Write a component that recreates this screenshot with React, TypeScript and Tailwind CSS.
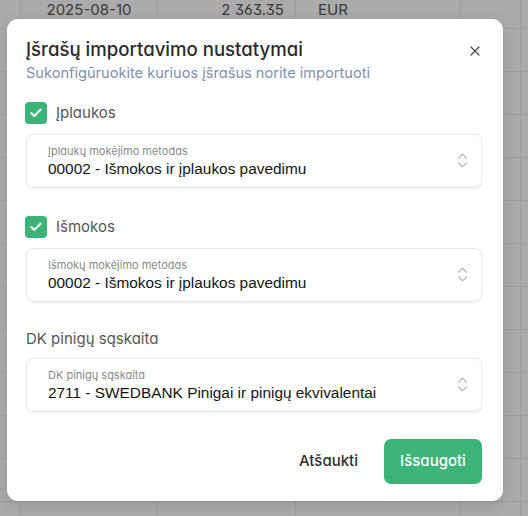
import { X, ChevronsUpDown, Check } from "lucide-react"

const geo = "font-['Inter',sans-serif] [font-feature-settings:'cv11','ss01']"

function Row({ first, children }: { first?: boolean; children?: React.ReactNode }) {
  return (
    <div className={`grid grid-cols-[21px_137px_138px_165px_60px_1fr] border-b border-[#9c9c9c] ${first ? "h-[29px]" : "h-[43px]"}`}>
      {children ?? (
        <>
          <div className="border-r border-[#9c9c9c]" />
          <div className="border-r border-[#9c9c9c]" />
          <div className="border-r border-[#9c9c9c]" />
          <div className="border-r border-[#9c9c9c]" />
          <div className="border-r border-[#9c9c9c]" />
          <div />
        </>
      )}
    </div>
  )
}

function Select({ label, value }: { label: string; value: string }) {
  return (
    <div className="h-[54px] rounded-[7px] border border-[#e8e8e8] bg-white shadow-[0_1px_3px_rgba(0,0,0,0.06)] flex items-start justify-between pl-[21px] pr-[9px]">
      <div className="pt-[8px]">
        <div className={`${geo} text-[11px] leading-[16px] text-[#8a8a8a]`}>{label}</div>
        <div className="font-['Liberation_Sans',Arial,sans-serif] text-[15.4px] leading-[20px] text-[#141414]">{value}</div>
      </div>
      <ChevronsUpDown className="mt-[16px] w-[19px] h-[19px] text-[#b0b0b0]" strokeWidth={1.6} />
    </div>
  )
}

function CheckRow({ label }: { label: string }) {
  return (
    <div className="h-[22px] flex items-center gap-[9px] -ml-px">
      <div className="w-[22px] h-[22px] rounded-[4px] bg-[#3cb478] flex items-center justify-center">
        <Check className="w-[14px] h-[14px] text-white" strokeWidth={3.5} />
      </div>
      <span className={`${geo} text-[15px] text-[#575757]`}>{label}</span>
    </div>
  )
}

export default function App() {
  return (
    <div className="relative w-[528px] h-[516px] overflow-hidden bg-[#ababab]">
      {/* table behind the overlay */}
      <div className={`${geo}`}>
        <Row first>
          <div className="border-r border-[#9c9c9c]" />
          <div className="border-r border-[#9c9c9c] pt-px text-center text-[15px] leading-[18px] text-[#3a3a3a]">2025-08-10</div>
          <div className="border-r border-[#9c9c9c] pt-px text-right pr-[11px] text-[15px] leading-[18px] text-[#3a3a3a]">2 363.35</div>
          <div className="border-r border-[#9c9c9c] pt-px pl-[22px] text-[15px] leading-[18px] text-[#3a3a3a]">EUR</div>
          <div className="border-r border-[#9c9c9c]" />
          <div />
        </Row>
        {Array.from({ length: 12 }).map((_, i) => (
          <Row key={i} />
        ))}
      </div>

      {/* dialog */}
      <div className="absolute left-[7px] top-[19px] w-[496px] h-[482px] rounded-[11px] bg-white shadow-[0_4px_16px_rgba(0,0,0,0.12)] pl-[19px] pr-[21px] pt-[16px] flex flex-col">
        <div className="flex items-start justify-between">
          <div>
            <h2 className={`${geo} text-[18.6px] leading-[28px] font-medium text-[#2b2b2b]`}>Įšrašų importavimo nustatymai</h2>
            <p className={`${geo} text-[14.6px] leading-[20px] text-[#8190ad]`}>Sukonfigūruokite kuriuos įšrašus norite importuoti</p>
          </div>
          <X className="mt-[8px] -mr-[1px] w-[16px] h-[16px] text-[#4a4a4a]" strokeWidth={1.8} />
        </div>

        <div className="mt-[19px] flex flex-col gap-[10px]">
          <CheckRow label="Įplaukos" />
          <Select label="Įplaukų mokėjimo metodas" value="00002 - Išmokos ir įplaukos pavedimu" />
        </div>

        <div className="mt-[28px] flex flex-col gap-[10px]">
          <CheckRow label="Išmokos" />
          <Select label="Išmokų mokėjimo metodas" value="00002 - Išmokos ir įplaukos pavedimu" />
        </div>

        <div className="mt-[26px] flex flex-col gap-[8px]">
          <div className={`${geo} h-[22px] flex items-center text-[15px] text-[#575757]`}>DK pinigų sąskaita</div>
          <Select label="DK pinigų sąskaita" value="2711 - SWEDBANK Pinigai ir pinigų ekvivalentai" />
        </div>

        <div className="mt-[27px] flex items-center justify-end gap-[26px]">
          <button className={`${geo} text-[15px] font-medium text-[#2e2e2e]`}>Atšaukti</button>
          <button className={`${geo} h-[45px] w-[98px] rounded-[7px] bg-[#3cb478] text-[15px] font-medium text-white`}>Išsaugoti</button>
        </div>
      </div>
    </div>
  )
}
